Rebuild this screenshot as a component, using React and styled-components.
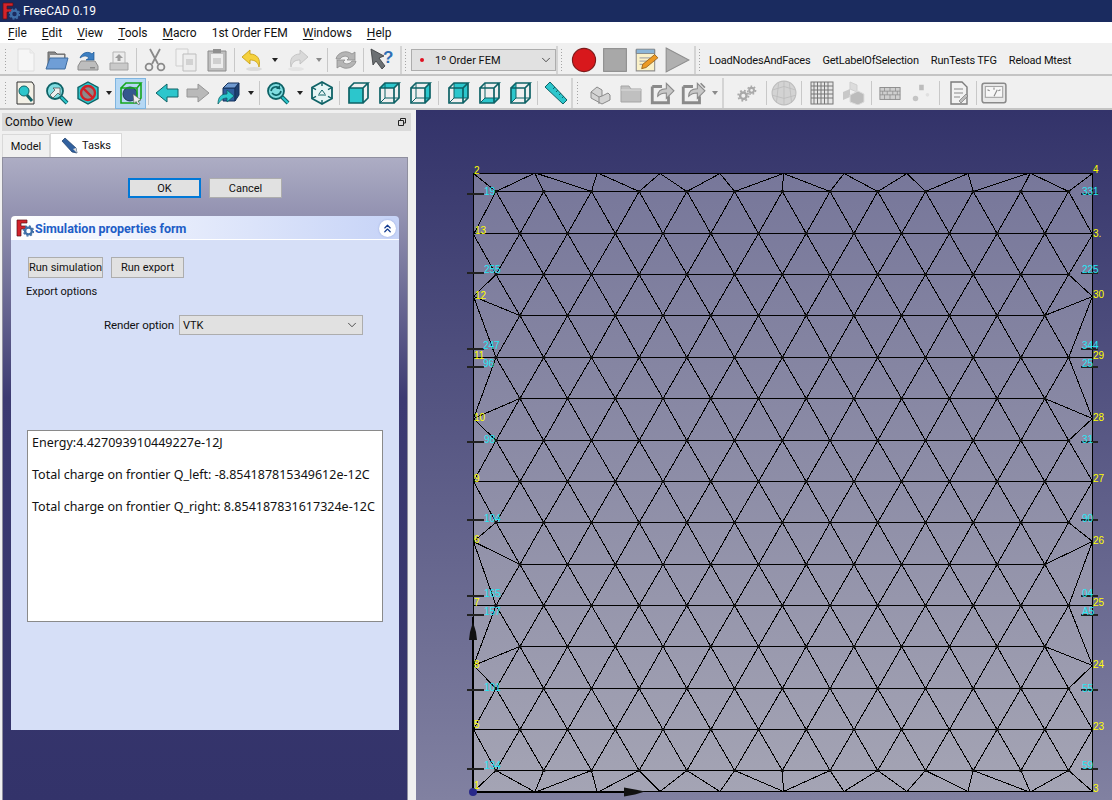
import React from "react";
import styled, { createGlobalStyle } from "styled-components";
import { ChevronDown, ChevronsUp } from "lucide-react";

const GlobalStyle = createGlobalStyle`
  html, body { margin: 0; padding: 0; background: #f0f0f0; }
  body { font-family: Roboto, "Liberation Sans", sans-serif; font-size: 12px; color: #111; }
`;

const Page = styled.div`
  width: 1112px;
  height: 800px;
  display: flex;
  flex-direction: column;
  overflow: hidden;
`;

const TitleBar = styled.div`
  height: 22px;
  flex: none;
  background: #1a2b5f;
  color: #fff;
  display: flex;
  align-items: center;
  gap: 3px;
  padding-left: 2px;
  font-size: 12px;
`;

const MenuBar = styled.div`
  height: 21px;
  flex: none;
  background: #fff;
  display: flex;
  align-items: center;
  gap: 15px;
  padding-left: 8px;
`;

const MenuItem = styled.span`
  u { text-underline-offset: 2px; }
`;

const ToolRow = styled.div`
  height: ${props => props.$height}px;
  flex: none;
  box-sizing: border-box;
  background: #f0f0f0;
  border-bottom: 2px solid #c4c4c4;
  padding-top: ${props => props.$top}px;
  display: flex;
  align-items: center;
`;

const Grip = styled.div`
  width: 3px;
  height: 24px;
  flex: none;
  margin: 0 ${props => props.$right ?? 3}px 0 ${props => props.$left ?? 4}px;
  background-image: radial-gradient(#a5a5a5 1px, transparent 1px);
  background-size: 3px 3px;
`;

const ToolButton = styled.div`
  width: ${props => props.$width ?? 31}px;
  height: 31px;
  flex: none;
  box-sizing: border-box;
  display: flex;
  align-items: center;
  justify-content: center;
  padding-left: ${props => props.$pad ?? 0}px;
  background: ${props => (props.$active ? "#b5d8f4" : "transparent")};
  border: 1px solid ${props => (props.$active ? "#7fb5e0" : "transparent")};
`;

const Caret = styled.div`
  width: ${props => props.$width ?? 13}px;
  flex: none;
  display: flex;
  justify-content: center;
  &::after {
    content: "";
    border-left: 3.5px solid transparent;
    border-right: 3.5px solid transparent;
    border-top: 4px solid ${props => (props.$off ? "#8a8a8a" : "#222")};
  }
`;

const Sep = styled.div`
  width: 1px;
  height: 24px;
  flex: none;
  background: #c8c8c8;
  margin: 0 ${props => props.$right ?? 2}px 0 ${props => props.$left ?? 2}px;
`;

const ToolEdge = styled.div`
  width: 2px;
  align-self: stretch;
  flex: none;
  background: #d4d4d4;
  margin-left: ${props => props.$left ?? 0}px;
`;

const WorkbenchSelect = styled.div`
  width: 145px;
  height: 22px;
  flex: none;
  box-sizing: border-box;
  background: #e1e1e1;
  border: 1px solid #adadad;
  display: flex;
  align-items: center;
  padding: 0 2px 0 7px;
  gap: 10px;
  font-size: 11px;
  span { flex: 1; }
`;

const TextActions = styled.div`
  display: flex;
  gap: 12px;
  margin-left: 8px;
  white-space: nowrap;
  font-size: 11px;
  letter-spacing: -0.2px;
`;

const Main = styled.div`
  flex: 1;
  min-height: 0;
  display: flex;
`;

const Dock = styled.div`
  width: 416px;
  flex: none;
  display: flex;
  flex-direction: column;
  box-sizing: border-box;
  padding-top: 3px;
  background: #f0f0f0;
`;

const DockHeader = styled.div`
  height: 18px;
  margin: 0 5px 0 2px;
  flex: none;
  background: #dadada;
  display: flex;
  align-items: center;
  justify-content: space-between;
  padding: 0 4px 0 3px;
  font-size: 12px;
`;

const Tabs = styled.div`
  height: 24px;
  margin-top: 2px;
  padding-left: 2px;
  flex: none;
  display: flex;
  align-items: flex-end;
`;

const Tab = styled.div`
  height: ${props => (props.$active ? 24 : 23)}px;
  width: ${props => (props.$active ? 72 : 48)}px;
  box-sizing: border-box;
  background: ${props => (props.$active ? "#fff" : "#f0f0f0")};
  border: 1px solid #d9d9d9;
  border-bottom: none;
  display: flex;
  align-items: center;
  justify-content: center;
  gap: 3px;
  font-size: 11px;
`;

const TaskPanel = styled.div`
  flex: 1;
  margin: 0 8px 0 2px;
  box-sizing: border-box;
  border: 1px solid #8f8f9f;
  border-bottom: none;
  background: linear-gradient(#adadc4 0, #3c3a72 240px, #33336a 100%);
  display: flex;
  flex-direction: column;
  padding-top: 20px;
`;

const DialogButtons = styled.div`
  display: flex;
  justify-content: center;
  gap: 8px;
`;

const PushButton = styled.div`
  width: ${props => props.$width ?? 73}px;
  height: ${props => props.$height ?? 20}px;
  flex: none;
  box-sizing: border-box;
  background: #e1e1e1;
  border: ${props => (props.$focused ? "2px solid #0078d7" : "1px solid #adadad")};
  display: flex;
  align-items: center;
  justify-content: center;
  white-space: nowrap;
  font-size: 11px;
`;

const TaskBox = styled.div`
  margin: 18px 0 0 8px;
  width: 388px;
  height: 514px;
  display: flex;
  flex-direction: column;
`;

const TaskHeader = styled.div`
  height: 24px;
  flex: none;
  box-sizing: border-box;
  border-radius: 4px 4px 0 0;
  border-bottom: 1px solid #fff;
  background: linear-gradient(90deg, #fff, #c6d3f7);
  display: flex;
  align-items: center;
  padding: 1px 3px 0 5px;
  gap: 1px;
  color: #215dc6;
  font-weight: 700;
  font-size: 12.5px;
  span { flex: 1; }
`;

const CollapseBadge = styled.div`
  width: 17px;
  height: 17px;
  border-radius: 50%;
  background: #fff;
  box-shadow: 0 0 2px #8fa3d8;
  display: flex;
  align-items: center;
  justify-content: center;
  color: #123b8f;
`;

const TaskBody = styled.div`
  flex: 1;
  background: #d6dff7;
  padding: 17px 0 0 15px;
  display: flex;
  flex-direction: column;
`;

const RunRow = styled.div`
  display: flex;
  gap: 8px;
  padding-left: 2px;
`;

const OptionTitle = styled.div`
  margin-top: 6px;
  line-height: 16px;
  font-size: 11px;
`;

const RenderRow = styled.div`
  display: flex;
  align-items: center;
  gap: 5px;
  padding-left: 78px;
  margin-top: 15px;
`;

const RenderLabel = styled.span`
  width: 70px;
  white-space: nowrap;
  font-size: 11.5px;
  letter-spacing: -0.1px;
`;

const RenderSelect = styled.div`
  width: 184px;
  height: 20px;
  box-sizing: border-box;
  background: #e1e1e1;
  border: 1px solid #adadad;
  display: flex;
  align-items: center;
  justify-content: space-between;
  padding: 0 3px;
  font-size: 11px;
`;

const ResultBox = styled.div`
  width: 356px;
  height: 192px;
  box-sizing: border-box;
  margin: 95px 0 0 1px;
  background: #fff;
  border: 1px solid #8a8a8a;
  padding: 4px;
  font-family: "Noto Sans", Roboto, sans-serif;
  font-size: 12.5px;
  p { margin: 0 0 16px; line-height: 16px; white-space: nowrap; }
`;

const Viewport = styled.div`
  flex: 1;
  background: linear-gradient(#33336a, #8181a1);
  svg { display: block; }
`;

const MeshLabel = styled.text`
  font-family: "Liberation Sans", sans-serif;
  font-size: 10px;
  fill: ${props => (props.$kind === "node" ? "#ffff00" : "#25e8f5")};
`;

const Icon = ({ children, size = 24 }) => (
  <svg width={size} height={size} viewBox="0 0 24 24">{children}</svg>
);

const teal = "#2cc6cc";
const deep = "#0e6266";
const off = "#a9a9a9";
const offDark = "#8a8a8a";

const FreeCadLogo = ({ size = 18 }) => (
  <svg width={size} height={size} viewBox="0 0 18 18">
    <path d="M1 1h10v3H5v3h5v3H5v7H1z" fill="#d2232a" stroke="#5a1014" strokeWidth=".7" />
    <circle cx="12.500" cy="12" r="3.400" fill="none" stroke="#3f6fa8" strokeWidth="2.400" />
    <circle cx="12.500" cy="12" r="5" fill="none" stroke="#3f6fa8" strokeWidth="1.400" strokeDasharray="2 1.900" />
  </svg>
);

const NewIcon = () => (
  <Icon><path d="M4 1h12l4 4v18H4z" fill="#f6f6f6" stroke="#dedede" /><path d="M16 1v4h4" fill="#eee" stroke="#e4e4e4" /></Icon>
);
const OpenIcon = () => (
  <Icon>
    <path d="M3 4h7l2 2h8v13H3z" fill="#8a8a8a" stroke="#666" />
    <path d="M5 7h14v4H5z" fill="#e6e6e6" />
    <path d="M5 10h18l-3 11H1z" fill="#6f9ed6" stroke="#3f6c9f" />
  </Icon>
);
const SaveIcon = () => (
  <Icon>
    <path d="M5 13h14l3 5v4H2v-4z" fill="#bdbdbd" stroke="#8b8b8b" />
    <path d="M4 10c2-6 9-7 12-4l2-2v8h-8l3-2c-3-3-6-2-9 0z" fill="#3d7fc2" stroke="#1f5a96" strokeWidth=".7" />
    <rect x="14" y="19" width="5" height="1.500" fill="#888" />
  </Icon>
);
const SaveAsIcon = () => (
  <Icon>
    <path d="M3 15h18v7H3z" fill="#c9c9c9" stroke="#a3a3a3" />
    <path d="M6 4h12v11H6z" fill="#ececec" stroke="#b5b5b5" />
    <path d="M12 6l4 4h-2.500v3h-3v-3H8z" fill="#9c9c9c" />
  </Icon>
);
const CutIcon = () => (
  <Icon>
    <g fill="none" stroke={offDark} strokeWidth="1.800">
      <path d="M7 1l8 15M17 1L9 16" />
      <circle cx="6" cy="19" r="3.400" />
      <circle cx="18" cy="19" r="3.400" />
    </g>
  </Icon>
);
const CopyIcon = () => (
  <Icon>
    <path d="M2 1h12v17H2z" fill="#f2f2f2" stroke="#cfcfcf" />
    <path d="M9 6h13v17H9z" fill="#ededed" stroke="#bdbdbd" />
    <path d="M12 11h7v6h-7z" fill="#d2d2d2" />
  </Icon>
);
const PasteIcon = () => (
  <Icon>
    <path d="M3 3h18v20H3z" fill="#bfbfbf" stroke="#8c8c8c" />
    <path d="M6 6h12v14H6z" fill="#ededed" />
    <path d="M8 1h8v4H8z" fill="#8f8f8f" />
    <path d="M8 10h8v6H8z" fill="#cfcfcf" />
  </Icon>
);
const UndoIcon = () => (
  <Icon>
    <ellipse cx="13" cy="21" rx="8" ry="2" fill="#dcdcdc" />
    <path d="M1 9l8-7v4c7 0 11 5 9 13-1-5-4-7-9-7v4z" fill="#f5d13d" stroke="#c39a10" strokeWidth=".8" />
  </Icon>
);
const RedoIcon = () => (
  <Icon>
    <ellipse cx="11" cy="21" rx="8" ry="2" fill="#e4e4e4" />
    <path d="M23 9l-8-7v4C8 6 4 11 6 19c1-5 4-7 9-7v4z" fill="#d9d9d9" stroke="#bcbcbc" strokeWidth=".8" />
  </Icon>
);
const RefreshIcon = () => (
  <Icon>
    <path d="M2 11c1-6 10-10 16-5l3-2v8h-8l2-2c-3-3-7-2-9 1zM22 13c-1 6-10 10-16 5l-3 2v-8h8l-2 2c3 3 7 2 9-1z" fill="#b5b5b5" stroke="#8d8d8d" strokeWidth=".8" />
  </Icon>
);
const WhatsThisIcon = () => (
  <Icon>
    <path d="M1 1l13 7-5 2 6 8-3 3-6-8-3 4z" fill="#6c7073" stroke="#36393b" strokeWidth=".8" />
    <text x="13" y="15" fontFamily="Liberation Sans" fontWeight="700" fontSize="17" fill="#2f6fb5">?</text>
  </Icon>
);

const Magnifier = ({ children }) => (
  <>
    <path d="M15 15l7 7" stroke={deep} strokeWidth="4" />
    <path d="M15 15l7 7" stroke={teal} strokeWidth="2" />
    <circle cx="10" cy="10" r="8" fill="#7fdde1" stroke={deep} strokeWidth="1.800" />
    {children}
  </>
);
const PageZoomIcon = () => (
  <Icon>
    <path d="M3 1h15l2 3v19H3z" fill="#f3f0e6" stroke="#333" />
    <path d="M13 14l5 6" stroke={deep} strokeWidth="3" />
    <circle cx="10" cy="10" r="5" fill={teal} stroke={deep} />
  </Icon>
);
const ZoomArrowIcon = () => (
  <Icon><Magnifier><path d="M5 14l5-5-2-2h7v7l-2-2-5 5z" fill="#eee" stroke="#444" strokeWidth=".7" /></Magnifier></Icon>
);
const NoDrawIcon = () => (
  <Icon>
    <path d="M12 1l10 5.500v11L12 23 2 17.500v-11z" fill={teal} stroke={deep} strokeWidth="1.400" />
    <circle cx="12" cy="12" r="7" fill="#8b8b8b" stroke="#d21f26" strokeWidth="2.400" />
    <path d="M7 7l10 10" stroke="#d21f26" strokeWidth="2.400" />
  </Icon>
);
const SelectCubeIcon = () => (
  <Icon>
    <circle cx="11" cy="13" r="7" fill="#34578e" stroke="#1d3558" />
    <path d="M2 7h16v15H2zM2 7l5-5h15l-4 5M22 2v15l-4 5" fill="none" stroke="#14a61d" strokeWidth="1.600" />
    <path d="M14 13l8 6-3 1 2 3-2 .5-2-3-2 2z" fill="#eee" stroke="#555" strokeWidth=".6" />
  </Icon>
);
const ArrowIcon = ({ dir, on }) => (
  <Icon>
    <path
      d={dir === "left" ? "M1 12L12 3v5h11v8H12v5z" : "M23 12L12 3v5H1v8h11v5z"}
      fill={on ? teal : "#b9b9b9"}
      stroke={on ? deep : "#969696"}
    />
  </Icon>
);
const SwapCubeIcon = () => (
  <Icon>
    <path d="M6 7h12v13H6z" fill="#2f5f9f" stroke="#16335c" />
    <path d="M6 7l5-5h11L18 7z" fill="#6f9ad0" stroke="#16335c" />
    <path d="M18 7l4-5v12l-4 6z" fill="#1d3f70" stroke="#16335c" />
    <path d="M1 23c0-7 3-10 9-10V9l7 6-7 6v-4c-4 0-6 2-9 6z" fill={teal} stroke={deep} strokeWidth=".8" />
  </Icon>
);
const ZoomSyncIcon = () => (
  <Icon><Magnifier><path d="M5 10a5 5 0 0 1 9-2M15 10a5 5 0 0 1-9 2" fill="none" stroke={deep} strokeWidth="1.600" /><path d="M14 4v4h-4z" fill={deep} /></Magnifier></Icon>
);
const WireCubeIcon = () => (
  <Icon>
    <path d="M12 1l10 5.500v11L12 23 2 17.500v-11z" fill="#e6f5f5" stroke={deep} strokeWidth="1.800" />
    <path d="M2 6.500l4 2.200M22 6.500l-4 2.200M12 1v4M12 23v-4M2 17.500l4-2.200M22 17.500l-4-2.200" fill="none" stroke={deep} strokeWidth="1.400" />
    <path d="M12 9l-3 4M12 9l3 4M8 14h8" stroke={deep} strokeWidth="1" />
  </Icon>
);
const faces = {
  front: "M3 7h14v15H3z",
  top: "M3 7l5-5h14l-5 5z",
  right: "M17 7l5-5v15l-5 5z",
  rear: "M8 2h14v15H8z",
  left: "M3 7l5-5v15l-5 5z",
  bottom: "M3 22l5-5h14l-5 5z",
};
const ViewCubeIcon = ({ face }) => (
  <Icon>
    <path d={faces[face]} fill={teal} />
    <path d="M3 7h14v15H3zM3 7l5-5h14l-5 5M22 2v15l-5 5" fill="none" stroke={deep} strokeWidth="1.700" />
    {face !== "front" && <path d="M8 2v15H22M8 17l-5 5" fill="none" stroke={deep} strokeWidth="1" />}
  </Icon>
);
const RulerIcon = () => (
  <Icon>
    <path d="M6 1l17 18-4 4L1 6z" fill={teal} stroke={deep} />
    <path d="M9 8l2-2M12 11l2-2M15 14l2-2M18 17l2-2" stroke={deep} />
  </Icon>
);

const PartIcon = () => (
  <Icon>
    <path d="M3 11l6-5 5 3v6l6-3 2 2v5l-8 4-11-6z" fill="#d4d4d4" stroke={offDark} />
    <path d="M3 11l8 5v7M11 16l3-1" fill="none" stroke={offDark} />
  </Icon>
);
const GreyFolderIcon = () => (
  <Icon><path d="M2 5h8l2 3h10v13H2z" fill="#c0c0c0" stroke="#a5a5a5" /><path d="M2 9h20" stroke="#dcdcdc" /></Icon>
);
const BoxArrowIcon = ({ twin }) => (
  <Icon size={26}>
    <path d="M3 6h9M3 6v15h15v-6" fill="none" stroke={offDark} strokeWidth="2.600" />
    <path d="M8 15c0-5 3-7 8-7V3l7 7-7 7v-5c-4 0-6 1-8 3z" fill="#c7c7c7" stroke={offDark} />
    {twin && <path d="M19 3l4 4" stroke={offDark} strokeWidth="1.500" />}
  </Icon>
);
const GearsIcon = () => (
  <Icon size={22}>
    <g fill="none" stroke={off}>
      <circle cx="8" cy="15" r="3.500" strokeWidth="2.600" />
      <circle cx="8" cy="15" r="5.600" strokeWidth="2" strokeDasharray="2 2.400" />
      <circle cx="17" cy="9" r="2.600" strokeWidth="2.200" />
      <circle cx="17" cy="9" r="4.400" strokeWidth="1.600" strokeDasharray="1.800 2" />
    </g>
  </Icon>
);
const SphereIcon = () => (
  <Icon size={26}>
    <circle cx="12" cy="12" r="11" fill="#d3d3d3" stroke="#bdbdbd" />
    <path d="M2 9l10-3 10 3M1 14l11 3 11-3M7 3l-2 18M17 3l2 18M12 1v22" fill="none" stroke="#bababa" strokeWidth=".7" />
  </Icon>
);
const GridIcon = () => (
  <Icon>
    <rect x="1" y="1" width="22" height="22" fill="#e6e6e6" stroke="#777" />
    <path d="M4 1v22M7.500 1v22M11 1v22M14.500 1v22M18 1v22M1 5h22M1 9h22M1 13h22M1 17h22" stroke="#777" />
  </Icon>
);
const CubesIcon = () => (
  <Icon>
    <path d="M9 1l7 3v7l-7-3z" fill="#dcdcdc" stroke="#cfcfcf" />
    <path d="M2 11l7-3v8l-7 3z" fill="#c8c8c8" />
    <path d="M9 14l8-4 6 3v8l-6 3-8-3z" fill="#bcbcbc" stroke="#ddd" />
  </Icon>
);
const BrickIcon = () => (
  <Icon size={22}>
    <rect x="1" y="6" width="22" height="13" fill="#cfcfcf" stroke={offDark} />
    <path d="M1 10h22M1 14h22M6 6v4M12 6v4M18 6v4M4 10v4M9 10v4M15 10v4M20 10v4M6 14v5M12 14v5M18 14v5" stroke={offDark} strokeWidth=".8" />
  </Icon>
);
const DotsIcon = () => (
  <Icon size={22}>
    <rect x="10" y="3" width="5" height="6" fill="#bcbcbc" />
    <circle cx="6" cy="18" r="3" fill="#c4c4c4" />
    <circle cx="19" cy="14" r="2" fill="#e0e0e0" />
  </Icon>
);
const ReportIcon = () => (
  <Icon>
    <path d="M4 1h11l5 5v17H4z" fill="#f2f2f2" stroke="#7c7c7c" strokeWidth="1.400" />
    <path d="M7 8h9M7 12h9M7 16h6" stroke="#8a8a8a" />
    <path d="M12 20l7-7 2 2-7 7z" fill="#bdbdbd" stroke="#7c7c7c" strokeWidth=".7" />
  </Icon>
);
const MeterIcon = () => (
  <Icon size={26}>
    <rect x="1" y="3" width="22" height="18" rx="2" fill="#e8e8e8" stroke="#8a8a8a" strokeWidth="1.400" />
    <rect x="4" y="6" width="16" height="10" fill="#f7f7f7" stroke="#a5a5a5" />
    <path d="M12 15l3-6M6 9l2 1M18 9l-2 1M12 7v2" stroke="#888" />
  </Icon>
);
const PencilIcon = () => (
  <svg width="18" height="18" viewBox="0 0 18 18">
    <path d="M1 4l3-3 11 10 1 5-5-1z" fill="#31619f" stroke="#1d3c66" strokeWidth=".7" />
    <path d="M12 12l3-1 1 5z" fill="#ddd" />
  </svg>
);
const RestoreIcon = () => (
  <svg width="10" height="10" viewBox="0 0 10 10">
    <path d="M3.500 3V1.500h5v4.500H7M1.500 3.500h5v5h-5z" fill="none" stroke="#222" />
  </svg>
);
const RedDot = () => (
  <svg width="6" height="6" viewBox="0 0 6 6"><circle cx="3" cy="3" r="2" fill="#e01020" /></svg>
);
const RecordIcon = () => (
  <Icon size={26}><circle cx="12" cy="12" r="10.700" fill="#d8181c" stroke="#7c1a1a" /></Icon>
);
const StopIcon = () => (
  <Icon size={26}><rect x="1.500" y="1.500" width="21" height="21" fill="#a8a8a8" stroke="#8c8c8c" /></Icon>
);
const MacroIcon = () => (
  <Icon size={26}>
    <path d="M3 3h17v19H3z" fill="#faf1c8" stroke="#8f8f8f" />
    <path d="M3 2h17v4H3z" fill="#8bb5d8" stroke="#777" strokeWidth=".7" />
    <path d="M6 10h10M6 13h10M6 16h6" stroke="#aaa" />
    <path d="M8 20l1-4 11-9 3 3-11 9z" fill="#ec9a25" stroke="#8a5510" strokeWidth=".7" />
  </Icon>
);
const PlayIcon = () => (
  <Icon size={26}><path d="M2 1l21 11L2 23z" fill="#b0b0b0" stroke="#8e8e8e" /></Icon>
);

const rowY = [191.5, 233.5, 274.5, 315.5, 357.5, 398.5, 440.5, 481.5, 522.5, 564.5, 605.5, 646.5, 688.5, 729.5, 770.5];
const evenX = k => 496 + 47.72 * k;
const oddX = k => 519.9 + 47.72 * k;
const LEFT = 473.5;
const RIGHT = 1092.5;
const TOP = 173.5;
const BOTTOM = 791.5;

const seg = (x1, y1, x2, y2) => `M${x1} ${y1}L${x2} ${y2}`;

const buildDiagonals = () => {
  const out = [];
  for (let i = 0; i < rowY.length - 1; i++) {
    for (let k = 0; k < 12; k++) {
      const [a, b] = i % 2 === 0 ? [i, i + 1] : [i + 1, i];
      out.push(seg(evenX(k), rowY[a], oddX(k), rowY[b]));
      out.push(seg(evenX(k + 1), rowY[a], oddX(k), rowY[b]));
    }
  }
  return out;
};

const buildSide = (bx, ex, ox) => {
  const r = rowY;
  return [
    [TOP, ex, r[0]], [234.5, ex, r[0]], [234.5, ex, r[2]],
    [296.5, ex, r[2]], [296.5, ox, r[3]], [296.5, ex, r[4]],
    [418.5, ex, r[4]], [418.5, ox, r[5]], [418.5, ex, r[6]],
    [481.5, ex, r[6]], [481.5, ex, r[8]],
    [541.5, ex, r[8]], [541.5, ox, r[9]], [541.5, ex, r[10]],
    [665.5, ex, r[10]], [665.5, ox, r[11]], [665.5, ex, r[12]],
    [729.5, ex, r[12]], [729.5, ex, r[14]], [BOTTOM, ex, r[14]],
  ].map(([by, x, y]) => seg(bx, by, x, y));
};

const rimLinks = [
  [0, 534], [1, 535], [2, 537], [2, 597], [3, 599], [3, 660], [4, 660], [4, 720], [5, 720], [5, 783.5],
  [6, 783.5], [7, 783.5], [7, 844], [8, 844], [8, 907], [9, 907], [9, 968], [10, 968], [10, 1028], [11, 1030], [12, 1031],
];

const buildRim = () =>
  rimLinks.flatMap(([k, x]) => [seg(evenX(k), rowY[0], x, TOP), seg(evenX(k), rowY[14], x, BOTTOM)]);

const buildRows = () =>
  rowY.map((y, i) => {
    if (i % 3 === 1) return seg(LEFT, y, RIGHT, y);
    return i % 2 === 0 ? seg(evenX(0), y, evenX(12), y) : seg(oddX(0), y, oddX(11), y);
  });

const meshPath = [...buildDiagonals(), ...buildSide(LEFT, evenX(0), oddX(0)), ...buildSide(RIGHT, evenX(12), oddX(11)), ...buildRim()].join("");
const rowsPath = buildRows().join("");

const meshNodes = rowY.flatMap((y, i) =>
  Array.from({ length: i % 2 === 0 ? 13 : 12 }, (_, k) => [i % 2 === 0 ? evenX(k) : oddX(k), y])
);

const tickY = [194, 273, 349, 367, 442, 520, 596, 615, 690, 769];

const labels = [
  ["node", 474, 174, "2"], ["node", 475, 234, "13"], ["node", 475, 299, "12"], ["node", 474, 359, "11"],
  ["node", 474, 421, "10"], ["node", 474, 482, "9"], ["node", 474, 543, "6"], ["node", 474, 606, "7"],
  ["node", 474, 668, "8"], ["node", 474, 728, "5"], ["node", 474, 789, "1"],
  ["node", 1093, 173, "4"], ["node", 1093, 237, "3."], ["node", 1093, 298, "30"], ["node", 1093, 359, "29"],
  ["node", 1093, 421, "28"], ["node", 1093, 482, "27"], ["node", 1093, 544, "26"], ["node", 1093, 606, "25"],
  ["node", 1093, 668, "24"], ["node", 1093, 730, "23"], ["node", 1093, 792, "3"],
  ["mid", 484, 195, "19"], ["mid", 484, 273, "255"], ["mid", 483, 349, "247"], ["mid", 483, 367, "96"],
  ["mid", 484, 443, "98"], ["mid", 484, 522, "104"], ["mid", 484, 597, "165"], ["mid", 484, 615, "157"],
  ["mid", 484, 691, "101"], ["mid", 484, 769, "134"],
  ["mid", 1082, 195, "331"], ["mid", 1082, 273, "225"], ["mid", 1082, 349, "344"], ["mid", 1082, 367, "25"],
  ["mid", 1082, 443, "31"], ["mid", 1082, 522, "90"], ["mid", 1082, 597, "04"], ["mid", 1082, 615, "A5"],
  ["mid", 1082, 692, "55"], ["mid", 1082, 769, "59"],
];

const MeshView = () => (
  <svg width="696" height="690" viewBox="416 110 696 690">
    <defs>
      <linearGradient id="meshFill" x1="0" y1="0" x2="0" y2="1">
        <stop offset="0" stopColor="#77779a" />
        <stop offset="1" stopColor="#a4a4b4" />
      </linearGradient>
    </defs>
    <rect x={LEFT} y={TOP} width={RIGHT - LEFT} height={BOTTOM - TOP} fill="url(#meshFill)" />
    <g shapeRendering="crispEdges" fill="none" stroke="#000">
      <path d={meshPath} />
      <path d={rowsPath} />
      <rect x={LEFT} y={TOP} width={RIGHT - LEFT} height={BOTTOM - TOP} />
      <path d="M473 617V792M473 791.500H640" strokeWidth="2" />
    </g>
    <g fill="#111">
      {meshNodes.map(([x, y]) => <rect key={`${x}-${y}`} x={x - 1.5} y={y - 1.5} width="3" height="3" />)}
      {tickY.map(y => <rect key={`l${y}`} x="467" y={y - 1} width="17" height="2" fill="#222" />)}
      {tickY.map(y => <rect key={`r${y}`} x="1081" y={y - 1} width="17" height="2" fill="#222" />)}
      <path d="M473 622l3 10 1 8h-8l1-8z" />
      <path d="M645 791.500l-10-2-11-2v9l11-2z" />
    </g>
    <circle cx="473" cy="792" r="4" fill="#28288a" />
    {labels.map(([kind, x, y, text]) => (
      <MeshLabel key={`${x}-${y}`} $kind={kind} x={x} y={y}>{text}</MeshLabel>
    ))}
  </svg>
);

const menus = [
  ["F", "ile"], ["E", "dit"], ["V", "iew"], ["T", "ools"], ["M", "acro"], ["", "1st Order FEM"], ["W", "indows"], ["H", "elp"],
];

const App = () => (
  <Page>
    <GlobalStyle />
    <TitleBar>
      <FreeCadLogo />
      <span>FreeCAD 0.19</span>
    </TitleBar>
    <MenuBar>
      {menus.map(([key, rest]) => (
        <MenuItem key={rest}><u>{key}</u>{rest}</MenuItem>
      ))}
    </MenuBar>
    <ToolRow $height={33} $top={3}>
      <Grip />
      <ToolButton><NewIcon /></ToolButton>
      <ToolButton><OpenIcon /></ToolButton>
      <ToolButton><SaveIcon /></ToolButton>
      <ToolButton><SaveAsIcon /></ToolButton>
      <Sep />
      <ToolButton><CutIcon /></ToolButton>
      <ToolButton><CopyIcon /></ToolButton>
      <ToolButton><PasteIcon /></ToolButton>
      <Sep />
      <ToolButton><UndoIcon /></ToolButton>
      <Caret />
      <ToolButton><RedoIcon /></ToolButton>
      <Caret $off />
      <Sep />
      <ToolButton><RefreshIcon /></ToolButton>
      <Sep />
      <ToolButton><WhatsThisIcon /></ToolButton>
      <ToolEdge $left={3} />
      <Grip $left={2} $right={4} />
      <WorkbenchSelect>
        <RedDot />
        <span>1º Order FEM</span>
        <ChevronDown size={14} strokeWidth={1.2} />
      </WorkbenchSelect>
      <ToolEdge />
      <Grip $left={2} $right={5} />
      <ToolButton><RecordIcon /></ToolButton>
      <ToolButton><StopIcon /></ToolButton>
      <ToolButton><MacroIcon /></ToolButton>
      <ToolButton><PlayIcon /></ToolButton>
      <ToolEdge $left={2} />
      <Grip $left={2} $right={0} />
      <TextActions>
        <span>LoadNodesAndFaces</span>
        <span>GetLabelOfSelection</span>
        <span>RunTests TFG</span>
        <span>Reload Mtest</span>
      </TextActions>
    </ToolRow>
    <ToolRow $height={34} $top={2}>
      <Grip />
      <ToolButton><PageZoomIcon /></ToolButton>
      <ToolButton><ZoomArrowIcon /></ToolButton>
      <ToolButton><NoDrawIcon /></ToolButton>
      <Caret $width={12} />
      <ToolButton $active><SelectCubeIcon /></ToolButton>
      <Sep />
      <ToolButton><ArrowIcon dir="left" on /></ToolButton>
      <ToolButton><ArrowIcon dir="right" /></ToolButton>
      <ToolButton><SwapCubeIcon /></ToolButton>
      <Caret />
      <Sep />
      <ToolButton><ZoomSyncIcon /></ToolButton>
      <Caret />
      <ToolButton><WireCubeIcon /></ToolButton>
      <Sep />
      <ToolButton><ViewCubeIcon face="front" /></ToolButton>
      <ToolButton><ViewCubeIcon face="top" /></ToolButton>
      <ToolButton><ViewCubeIcon face="right" /></ToolButton>
      <Sep $left={3} $right={3} />
      <ToolButton><ViewCubeIcon face="rear" /></ToolButton>
      <ToolButton><ViewCubeIcon face="bottom" /></ToolButton>
      <ToolButton><ViewCubeIcon face="left" /></ToolButton>
      <Sep />
      <ToolButton><RulerIcon /></ToolButton>
      <ToolEdge />
      <Grip $left={3} $right={5} />
      <ToolButton><PartIcon /></ToolButton>
      <ToolButton><GreyFolderIcon /></ToolButton>
      <ToolButton><BoxArrowIcon /></ToolButton>
      <ToolButton><BoxArrowIcon twin /></ToolButton>
      <Caret $width={14} $off />
      <ToolEdge />
      <ToolButton $width={42} $pad={4}><GearsIcon /></ToolButton>
      <Sep $left={0} $right={0} />
      <ToolButton $width={34}><SphereIcon /></ToolButton>
      <Sep $left={0} $right={4} />
      <ToolButton><GridIcon /></ToolButton>
      <ToolButton><CubesIcon /></ToolButton>
      <Sep $left={3} $right={2} />
      <ToolButton><BrickIcon /></ToolButton>
      <ToolButton><DotsIcon /></ToolButton>
      <Sep $left={3} $right={3} />
      <ToolButton><ReportIcon /></ToolButton>
      <Sep $left={2} $right={1} />
      <ToolButton><MeterIcon /></ToolButton>
    </ToolRow>
    <Main>
      <Dock>
        <DockHeader>
          <span>Combo View</span>
          <RestoreIcon />
        </DockHeader>
        <Tabs>
          <Tab>Model</Tab>
          <Tab $active><PencilIcon />Tasks</Tab>
        </Tabs>
        <TaskPanel>
          <DialogButtons>
            <PushButton $focused>OK</PushButton>
            <PushButton>Cancel</PushButton>
          </DialogButtons>
          <TaskBox>
            <TaskHeader>
              <FreeCadLogo />
              <span>Simulation properties form</span>
              <CollapseBadge><ChevronsUp size={13} strokeWidth={2.2} /></CollapseBadge>
            </TaskHeader>
            <TaskBody>
              <RunRow>
                <PushButton $width={75} $height={21}>Run simulation</PushButton>
                <PushButton $width={73} $height={21}>Run export</PushButton>
              </RunRow>
              <OptionTitle>Export options</OptionTitle>
              <RenderRow>
                <RenderLabel>Render option</RenderLabel>
                <RenderSelect>
                  <span>VTK</span>
                  <ChevronDown size={14} strokeWidth={1.2} />
                </RenderSelect>
              </RenderRow>
              <ResultBox>
                <p>Energy:4.427093910449227e-12J</p>
                <p>Total charge on frontier Q_left: -8.854187815349612e-12C</p>
                <p>Total charge on frontier Q_right: 8.854187831617324e-12C</p>
              </ResultBox>
            </TaskBody>
          </TaskBox>
        </TaskPanel>
      </Dock>
      <Viewport>
        <MeshView />
      </Viewport>
    </Main>
  </Page>
);

export default App;
